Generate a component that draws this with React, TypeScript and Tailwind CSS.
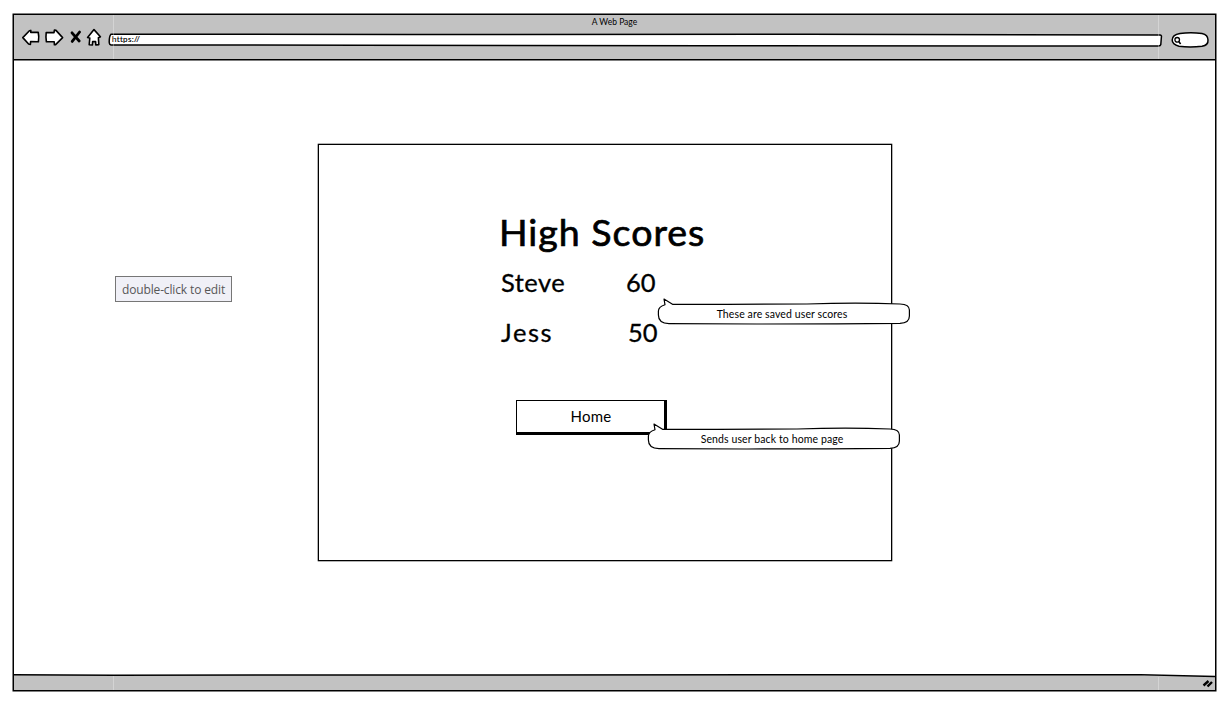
import React from "react";

const sketch = "font-['Lato','Noto_Sans',sans-serif]";

function NavIcons() {
  return (
    <svg width="82" height="22" viewBox="0 0 82 22" fill="#fff" stroke="#000" strokeWidth="1.6" strokeLinejoin="round" strokeLinecap="round" className="shrink-0">
      <path d="M1.8 10.6 L8.4 3.8 L9.8 3.4 L9.8 5.4 L17.2 5.2 Q18.2 9 17.4 14.8 L9.6 14.6 L9.4 17.4 L7.6 17 Z" />
      <path d="M25.2 5.6 L33 5.6 L33.4 3 L35 3.4 L41.6 10.6 L34.6 17.6 L33.4 17.8 L33.2 14.8 L25.4 14.8 Q24.6 10 25.2 5.6 Z" />
      <path d="M51 5.8 L58.2 14 M58.6 5 L51.2 14.4" strokeWidth="2.8" fill="none" />
      <path d="M73 2.6 L79.4 9.8 L77.4 10.8 L77.8 17.6 L74.8 18 L74.6 14.6 L71.6 14.6 L71.4 18 L68.2 17.8 L68.8 11 L66.6 10.4 Z" />
    </svg>
  );
}

function AddressBar() {
  return (
    <div className="relative h-[14px] w-[1056px]">
      <svg width="1056" height="14" viewBox="0 0 1056 14" className="absolute left-0 top-0" fill="#fff" stroke="#000" strokeWidth="1.5">
        <path d="M3 1.2 L300 1.5 L700 1.2 L1052 2 Q1053.8 2.2 1053.4 4 L1052.8 11.5 Q1052.4 13.2 1050 13 L600 12.8 L250 12.2 L3 12 Q1.4 11.8 1.2 9 Q1.2 3 3 1.2 Z" />
      </svg>
      <span className={`${sketch} absolute left-[4px] top-px text-[8px] leading-[10px] tracking-[0.32px] [-webkit-text-stroke:0.15px_#000]`}>https://</span>
    </div>
  );
}

function SearchBox() {
  return (
    <svg width="39" height="18" viewBox="0 0 39 18" fill="#fff" stroke="#000" strokeWidth="1.5" className="shrink-0">
      <path d="M9 2.5 Q19 1 31 2.4 Q37 3.6 37 9 Q37.4 14.2 31 15.2 Q19 16.6 8 15.2 Q1.2 13.6 1.2 9 Q1.2 3.8 9 2.5 Z" />
      <circle cx="6.2" cy="8.8" r="2.3" strokeWidth="1.3" />
      <path d="M7.8 10.6 L9.6 13" strokeWidth="1.6" />
    </svg>
  );
}

function Callout({ children, className }: { children: React.ReactNode; className: string }) {
  return (
    <div className={`absolute h-[28px] w-[254px] ${className}`}>
      <svg width="254" height="28" viewBox="0 0 254 28" className="absolute left-0 top-0" fill="#fff" stroke="#000" strokeWidth="1.2" strokeLinejoin="round">
        <path d="M8 7.8 L7 2 L15.5 7.3 L70 7.3 L150 7 Q200 5.4 243 7 Q252.4 7.4 252.4 13 L252.4 19 Q252.4 26 243 26.4 L180 26.8 L100 27 L12 26.6 Q1.4 26.4 1.4 18 L1.4 14 Q1.6 9.8 8 7.8 Z" />
      </svg>
      <span className={`${sketch} absolute left-0 right-[4px] top-[10px] whitespace-nowrap text-center text-[10.5px] leading-[14px] tracking-[0.11px]`}>{children}</span>
    </div>
  );
}

function Score({ name, value, nameSpacing, offset }: { name: string; value: number; nameSpacing: string; offset: string }) {
  return (
    <div className="flex h-[50px] items-center pl-[2px] text-[25.5px] leading-none [-webkit-text-stroke:0.3px_#000]">
      <span className={`w-[125px] ${nameSpacing}`}>{name}</span>
      <span className={offset}>{value}</span>
    </div>
  );
}

export default function App() {
  return (
    <div className="relative h-[703px] w-[1228px] overflow-hidden bg-white pl-[13px] pt-[14px] text-black">
      <div className="flex h-[677px] w-[1203px] flex-col border-[1.5px] border-black bg-white shadow-[0_0_0_0.5px_#000]">
        <header className="relative h-[45px] shrink-0 border-b border-black bg-[#c2c2c2] shadow-[0_0.5px_0_#000]">
          <h1 className={`${sketch} pt-[2px] text-center text-[8.5px] leading-[10px] tracking-[0.02px]`}>A Web Page</h1>
          <div className="flex items-start pl-[7px]">
            <NavIcons />
            <div className="ml-[5px] mt-[6px]"><AddressBar /></div>
            <div className="ml-[7px] mt-[4px]"><SearchBox /></div>
          </div>
          <div className="absolute bottom-0 left-[99px] top-0 w-px bg-white/30" />
          <div className="absolute bottom-0 left-[1144px] top-0 w-px bg-white/30" />
        </header>

        <main className="flex-1 pl-[304px] pt-[84px]">
          <section className={`${sketch} h-[417px] w-[574px] border border-black pl-[180px] pt-[63px] shadow-[0_0_0_0.3px_#000]`}>
            <h2 className="mb-[2px] whitespace-nowrap text-[37.5px] leading-[48px] tracking-[1px] [-webkit-text-stroke:0.7px_#000]">High Scores</h2>
            <Score name="Steve" value={60} nameSpacing="tracking-[0.5px]" offset="" />
            <Score name="Jess" value={50} nameSpacing="tracking-[1.6px]" offset="ml-[2px]" />
            <button className="ml-[17px] mt-[42px] flex h-[35px] w-[151px] items-center justify-center border border-b-[3px] border-r-[3px] border-black bg-white pl-px text-[15px] tracking-[0.3px]">
              Home
            </button>
          </section>
        </main>

        <footer className="relative h-[15px] shrink-0">
          <svg width="1201" height="17" viewBox="0 0 1201 17" className="absolute -top-px left-0">
            <path d="M0 .8 L100 1.2 L1120 .6 L1201 2.4 V16 H0 Z" fill="#c2c2c2" />
            <path d="M0 .8 L100 1.2 L1120 .6 L1201 2.4" fill="none" stroke="#000" strokeWidth="1.5" />
            <path d="M1189.5 11.5 L1194.5 7 M1193.5 12.5 L1198 8" stroke="#000" strokeWidth="2.4" />
            <path d="M99.5 2 V16 M1144.5 3 V16" stroke="#d4d4d4" strokeWidth="1" />
          </svg>
        </footer>
      </div>

      <div className="absolute left-[115px] top-[276px] flex h-[26px] w-[117px] items-center justify-center border border-[#767676] bg-[#f0f0f7] pt-[2px] font-['Open_Sans','Noto_Sans',sans-serif] text-[12px] tracking-[-0.14px] text-[#575757]">
        <span className="whitespace-nowrap">double-click to edit</span>
      </div>
      <Callout className="left-[657px] top-[297px]">These are saved user scores</Callout>
      <Callout className="left-[647px] top-[422px]">Sends user back to home page</Callout>
    </div>
  );
}
